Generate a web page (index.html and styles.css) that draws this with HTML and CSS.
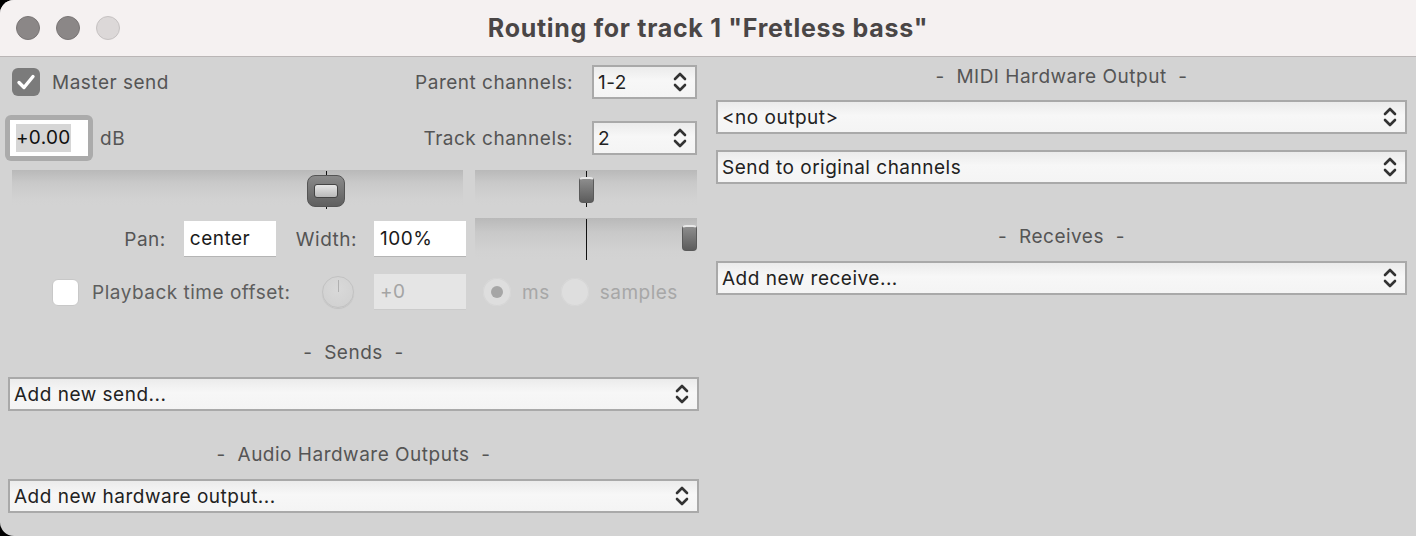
FILE: index.html
```html
<!DOCTYPE html>
<html>
<head>
<meta charset="utf-8">
<link rel="stylesheet" href="styles.css">
</head>
<body>
<div class="window">
  <div class="titlebar">
    <div class="lights">
      <span class="light"></span><span class="light"></span><span class="light off"></span>
    </div>
    <div class="title">Routing for track 1 "Fretless bass"</div>
    <div></div>
  </div>
  <div class="content">
    <div class="col left">
      <div class="row r1">
        <div class="check">
          <span class="cb on"><svg width="28" height="28" viewBox="0 0 28 28"><path d="M7 14.5 L12 19.5 L21 8.5" fill="none" stroke="#fff" stroke-width="3.4" stroke-linecap="round" stroke-linejoin="round"/></svg></span>
          <span class="lbl">Master send</span>
        </div>
        <div class="field">
          <span class="lbl">Parent channels:</span>
          <div class="select small"><span>1-2</span><svg class="chev" width="14" height="22" viewBox="0 0 14 22"><path d="M2 8 L7 3 L12 8 M2 14 L7 19 L12 14" fill="none" stroke="#333" stroke-width="2.6" stroke-linecap="round" stroke-linejoin="round"/></svg></div>
        </div>
      </div>
      <div class="row r2">
        <div class="dbgroup">
          <div class="dbring"><div class="dbfield"><span class="sel">+0.00</span></div></div>
          <span class="lbl">dB</span>
        </div>
        <div class="field">
          <span class="lbl">Track channels:</span>
          <div class="select small"><span>2</span><svg class="chev" width="14" height="22" viewBox="0 0 14 22"><path d="M2 8 L7 3 L12 8 M2 14 L7 19 L12 14" fill="none" stroke="#333" stroke-width="2.6" stroke-linecap="round" stroke-linejoin="round"/></svg></div>
        </div>
      </div>
      <div class="row r3">
        <div class="slider vol">
          <span class="tick"></span>
          <span class="bigthumb"><span class="inner"></span></span>
        </div>
        <div class="slider pan">
          <span class="tick"></span>
          <span class="smallthumb"></span>
        </div>
      </div>
      <div class="row r4">
        <div class="leftpart pw">
          <span class="lbl">Pan:</span>
          <div class="input">center</div>
          <span class="lbl wlbl">Width:</span>
          <div class="input">100%</div>
        </div>
        <div class="slider width">
          <span class="tick"></span>
          <span class="smallthumb"></span>
        </div>
      </div>
      <div class="row r5">
        <div class="leftpart pb">
          <span class="cb white"></span>
          <span class="lbl">Playback time offset:</span>
          <span class="knob"><span class="knobtick"></span></span>
          <div class="input disabled">+0</div>
        </div>
        <div class="radios">
          <span class="radio on"><span class="dot"></span></span>
          <span class="dis">ms</span>
          <span class="radio"></span>
          <span class="dis">samples</span>
        </div>
      </div>
      <div class="heading h-sends">-&nbsp;&nbsp;Sends&nbsp;&nbsp;-</div>
      <div class="select wide"><span>Add new send...</span><svg class="chev" width="14" height="22" viewBox="0 0 14 22"><path d="M2 8 L7 3 L12 8 M2 14 L7 19 L12 14" fill="none" stroke="#333" stroke-width="2.6" stroke-linecap="round" stroke-linejoin="round"/></svg></div>
      <div class="heading h-audio">-&nbsp;&nbsp;Audio Hardware Outputs&nbsp;&nbsp;-</div>
      <div class="select wide"><span>Add new hardware output...</span><svg class="chev" width="14" height="22" viewBox="0 0 14 22"><path d="M2 8 L7 3 L12 8 M2 14 L7 19 L12 14" fill="none" stroke="#333" stroke-width="2.6" stroke-linecap="round" stroke-linejoin="round"/></svg></div>
    </div>
    <div class="col right">
      <div class="heading h-midi">-&nbsp;&nbsp;MIDI Hardware Output&nbsp;&nbsp;-</div>
      <div class="select wide"><span>&lt;no output&gt;</span><svg class="chev" width="14" height="22" viewBox="0 0 14 22"><path d="M2 8 L7 3 L12 8 M2 14 L7 19 L12 14" fill="none" stroke="#333" stroke-width="2.6" stroke-linecap="round" stroke-linejoin="round"/></svg></div>
      <div class="select wide s2"><span>Send to original channels</span><svg class="chev" width="14" height="22" viewBox="0 0 14 22"><path d="M2 8 L7 3 L12 8 M2 14 L7 19 L12 14" fill="none" stroke="#333" stroke-width="2.6" stroke-linecap="round" stroke-linejoin="round"/></svg></div>
      <div class="heading h-recv">-&nbsp;&nbsp;Receives&nbsp;&nbsp;-</div>
      <div class="select wide"><span>Add new receive...</span><svg class="chev" width="14" height="22" viewBox="0 0 14 22"><path d="M2 8 L7 3 L12 8 M2 14 L7 19 L12 14" fill="none" stroke="#333" stroke-width="2.6" stroke-linecap="round" stroke-linejoin="round"/></svg></div>
    </div>
  </div>
</div>
</body>
</html>
```

FILE: styles.css
```css
html, body {
  margin: 0;
  padding: 0;
  background: #000;
}
body {
  font-family: Inter, "Liberation Sans", sans-serif;
  font-size: 19px;
  letter-spacing: 0.5px;
}
.window {
  width: 1416px;
  height: 536px;
  background: #d3d3d3;
  border-radius: 14px 0 0 14px;
  overflow: hidden;
}
.titlebar {
  height: 56px;
  background: #f5f1f1;
  border-bottom: 1px solid #bab6b6;
  display: grid;
  grid-template-columns: 1fr auto 1fr;
  align-items: center;
}
.lights {
  display: flex;
  gap: 16px;
  padding-left: 16px;
}
.light {
  width: 24px;
  height: 24px;
  border-radius: 50%;
  background: #8b8787;
  border: 1px solid #7a7676;
  box-sizing: border-box;
}
.light.off {
  background: #dcd8d8;
  border-color: #c6c2c2;
}
.title {
  font-weight: 700;
  font-size: 25px;
  color: #4a4646;
  letter-spacing: 0.7px;
}
.content {
  display: flex;
  gap: 17px;
  padding: 0 8px;
}
.col {
  width: 691px;
  display: flex;
  flex-direction: column;
}
.row {
  display: flex;
  align-items: center;
}
.lbl {
  color: #555;
}
.r1 {
  margin-top: 8px;
  height: 34px;
  justify-content: space-between;
  padding-right: 2px;
}
.check {
  display: flex;
  align-items: center;
  gap: 12px;
  margin-left: 4px;
}
.cb {
  width: 28px;
  height: 28px;
  border-radius: 6px;
  display: block;
  box-sizing: border-box;
}
.cb.on {
  background: #7b7b7b;
}
.cb svg {
  display: block;
}
.cb.white {
  width: 27px;
  height: 27px;
  background: #fff;
  border: 1px solid #c8c8c8;
}
.field {
  display: flex;
  align-items: center;
  gap: 19px;
}
.select {
  height: 34px;
  box-sizing: border-box;
  border: 2px solid #a9a9a9;
  background: linear-gradient(to bottom, #ebebeb 0%, #f7f7f7 45%, #f4f4f4 100%);
  display: flex;
  align-items: center;
  justify-content: space-between;
  padding: 0 8px 0 4px;
  color: #222;
}
.select.small {
  width: 105px;
}
.chev {
  display: block;
}
.r2 {
  margin-top: 16px;
  height: 46px;
  justify-content: space-between;
  padding-right: 2px;
}
.dbgroup {
  display: flex;
  align-items: center;
  gap: 7px;
  margin-left: -3px;
}
.dbring {
  width: 88px;
  height: 46px;
  box-sizing: border-box;
  background: #ababab;
  border-radius: 6px;
  padding: 5px;
}
.dbfield {
  background: #fff;
  height: 36px;
  display: flex;
  align-items: center;
  padding-left: 6px;
}
.dbfield .sel {
  background: #d6d6d6;
  color: #111;
  padding: 3px 0;
  line-height: 22px;
  letter-spacing: 0.3px;
}
.r3 {
  margin-top: 9px;
  height: 36px;
  align-items: stretch;
}
.slider {
  position: relative;
  background: linear-gradient(to bottom, #b9b9b9 0%, #c9c9c9 35%, #d2d2d2 80%, #d3d3d3 100%);
}
.slider.vol {
  margin-left: 4px;
  width: 451px;
}
.slider.pan {
  margin-left: 12px;
  width: 222px;
}
.tick {
  position: absolute;
  width: 1px;
  background: #111;
}
.vol .tick {
  left: 314px;
  top: 1px;
  height: 38px;
}
.pan .tick {
  left: 111px;
  top: 1px;
  height: 36px;
}
.bigthumb {
  position: absolute;
  left: 295px;
  top: 5px;
  width: 38px;
  height: 32px;
  box-sizing: border-box;
  border-radius: 8px;
  background: linear-gradient(to bottom, #8a8a8a, #5f5f5f);
  border: 1px solid #555;
  display: flex;
  align-items: center;
  justify-content: center;
}
.bigthumb .inner {
  width: 22px;
  height: 12px;
  border-radius: 3px;
  background: linear-gradient(to bottom, #e6e6e6, #b9b9b9);
  border: 1px solid #444;
}
.smallthumb {
  position: absolute;
  width: 15px;
  height: 26px;
  box-sizing: border-box;
  border-radius: 4px;
  background: linear-gradient(to bottom, #8d8d8d, #5c5c5c);
  border: 1px solid #5a5a5a;
  border-top: 2px solid #e8e8e8;
}
.pan .smallthumb {
  left: 104px;
  top: 7px;
}
.r4 {
  margin-top: 12px;
  height: 42px;
  align-items: stretch;
}
.leftpart {
  width: 458px;
  display: flex;
  align-items: center;
}
.pw {
  justify-content: flex-end;
}
.pw .lbl {
  margin-right: 18px;
}
.pw .wlbl {
  margin-left: 20px;
  margin-right: 17px;
}
.input {
  width: 92px;
  height: 36px;
  box-sizing: border-box;
  background: #fff;
  border-bottom: 1px solid #b5b5b5;
  display: flex;
  align-items: center;
  padding-left: 6px;
  color: #1a1a1a;
}
.input.disabled {
  background: #e5e5e5;
  color: #a4a4a4;
  border-bottom-color: #cbcbcb;
}
.slider.width {
  margin-left: 9px;
  width: 222px;
}
.width .tick {
  left: 111px;
  top: 1px;
  height: 41px;
}
.width .smallthumb {
  left: 207px;
  top: 7px;
}
.r5 {
  margin-top: 14px;
  height: 36px;
}
.pb .cb {
  margin-left: 44px;
}
.pb .lbl {
  margin-left: 13px;
  color: #5e5e5e;
}
.knob {
  margin-left: auto;
  margin-right: 20px;
  width: 32px;
  height: 32px;
  box-sizing: border-box;
  border-radius: 50%;
  border: 1px solid #c2c2c2;
  background: radial-gradient(circle at 50% 40%, #d9d9d9, #cfcfcf);
  box-shadow: 0 1px 1px rgba(0,0,0,0.08);
  position: relative;
}
.knobtick {
  position: absolute;
  left: 15px;
  top: 3px;
  width: 1px;
  height: 12px;
  background: #b0b0b0;
}
.radios {
  display: flex;
  align-items: center;
  margin-left: 17px;
}
.radio {
  width: 28px;
  height: 28px;
  border-radius: 50%;
  background: #dedede;
  box-shadow: 0 0 0 1px #d6d6d6 inset;
  display: flex;
  align-items: center;
  justify-content: center;
}
.radio .dot {
  width: 12px;
  height: 12px;
  border-radius: 50%;
  background: #a6a6a6;
}
.dis {
  color: #a7a7a7;
  margin-left: 11px;
  margin-right: 11px;
}
.heading {
  text-align: center;
  color: #555;
  line-height: 22px;
}
.h-sends {
  margin-top: 32px;
  margin-bottom: 13px;
}
.h-audio {
  margin-top: 33px;
  margin-bottom: 13px;
}
.h-midi {
  margin-top: 9px;
  margin-bottom: 12px;
}
.s2 {
  margin-top: 16px;
}
.h-recv {
  margin-top: 42px;
  margin-bottom: 13px;
}
.select.wide {
  width: 691px;
}
```
